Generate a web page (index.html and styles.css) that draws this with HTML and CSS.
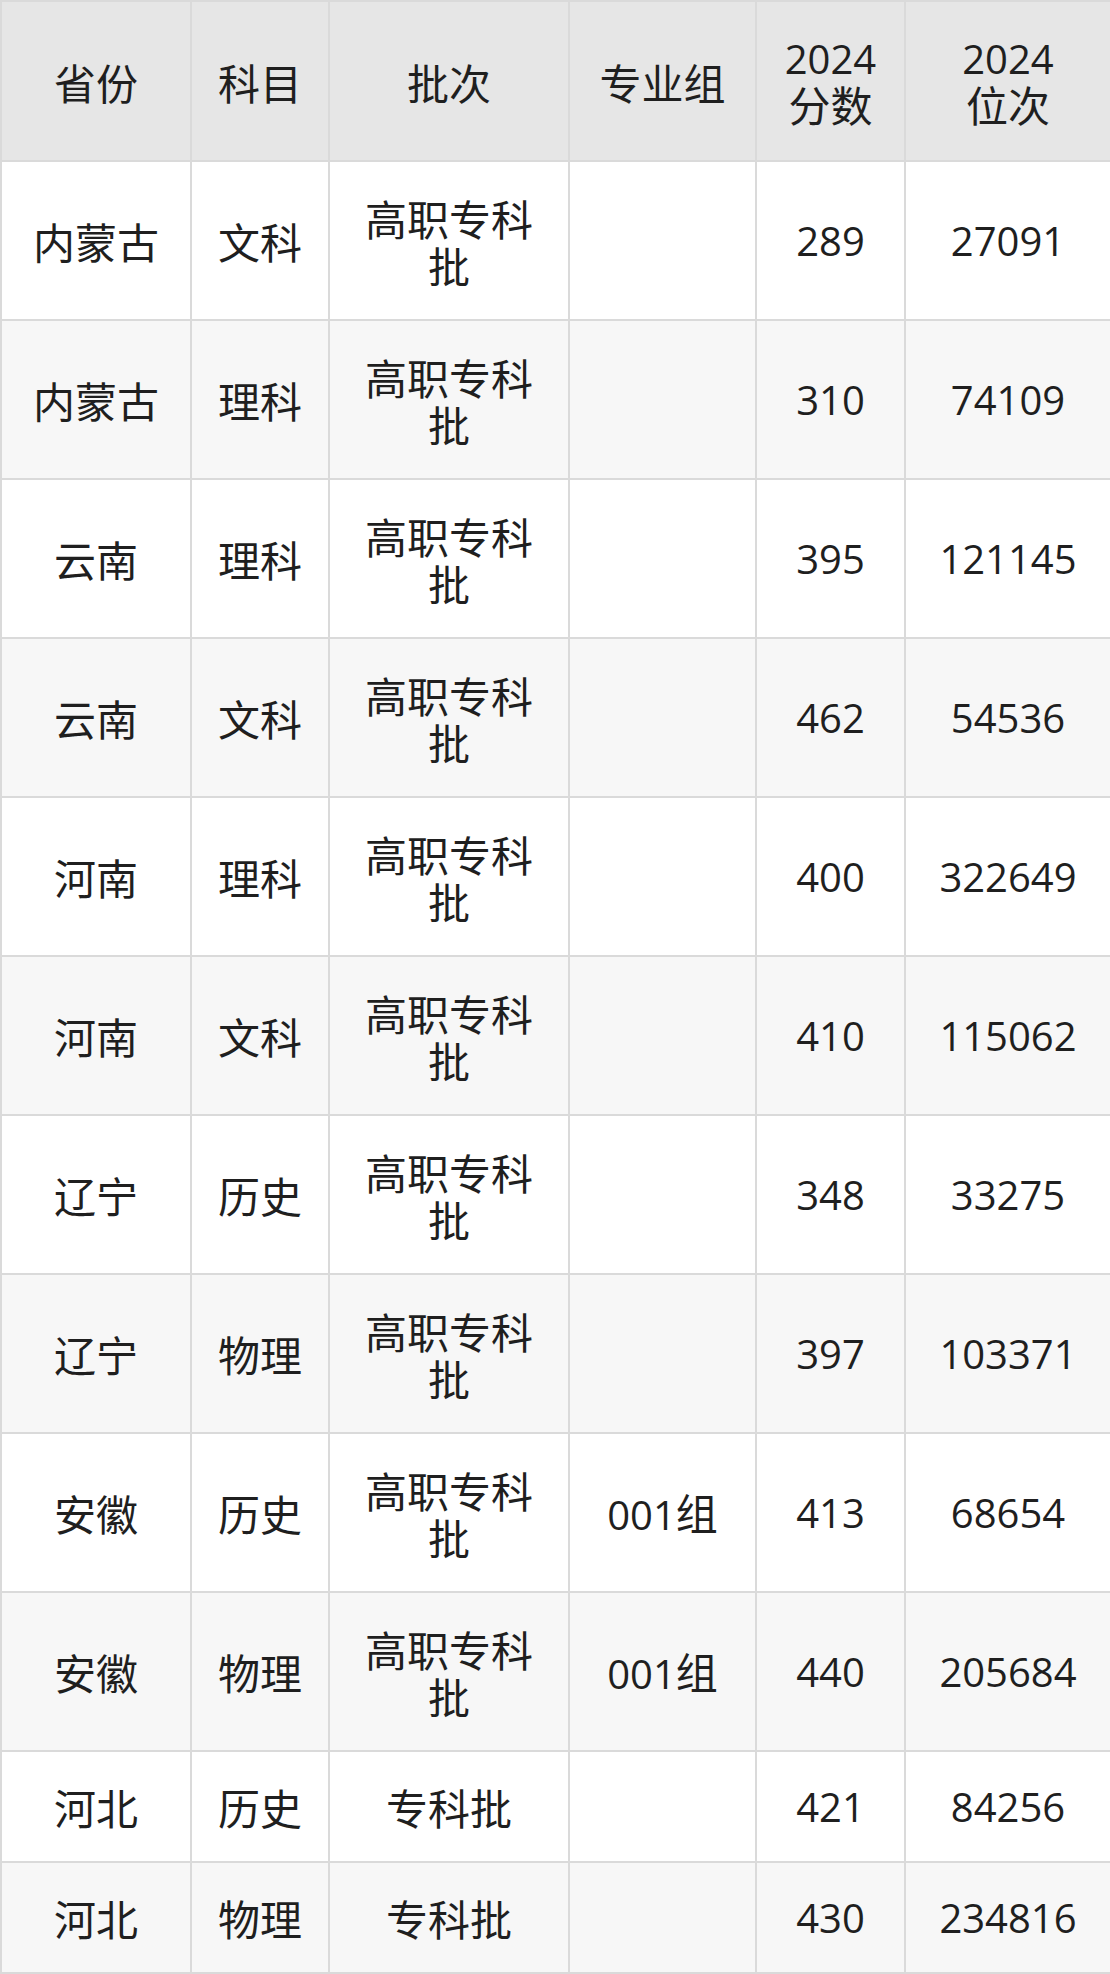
FILE: index.html
```html
<!DOCTYPE html>
<html lang="zh">
<head>
<meta charset="utf-8">
<link rel="stylesheet" href="styles.css">
</head>
<body>
<table class="score-table">
  <colgroup>
    <col class="c1"><col class="c2"><col class="c3"><col class="c4"><col class="c5"><col class="c6">
  </colgroup>
  <thead>
    <tr>
      <th class="zh">省份</th>
      <th class="zh">科目</th>
      <th class="zh">批次</th>
      <th class="zh">专业组</th>
      <th><div class="hline">2024</div><div class="hline zh">分数</div></th>
      <th><div class="hline">2024</div><div class="hline zh">位次</div></th>
    </tr>
  </thead>
  <tbody>
    <tr><td class="zh">内蒙古</td><td class="zh">文科</td><td class="zh">高职专科批</td><td></td><td>289</td><td>27091</td></tr>
    <tr><td class="zh">内蒙古</td><td class="zh">理科</td><td class="zh">高职专科批</td><td></td><td>310</td><td>74109</td></tr>
    <tr><td class="zh">云南</td><td class="zh">理科</td><td class="zh">高职专科批</td><td></td><td>395</td><td>121145</td></tr>
    <tr><td class="zh">云南</td><td class="zh">文科</td><td class="zh">高职专科批</td><td></td><td>462</td><td>54536</td></tr>
    <tr><td class="zh">河南</td><td class="zh">理科</td><td class="zh">高职专科批</td><td></td><td>400</td><td>322649</td></tr>
    <tr><td class="zh">河南</td><td class="zh">文科</td><td class="zh">高职专科批</td><td></td><td>410</td><td>115062</td></tr>
    <tr><td class="zh">辽宁</td><td class="zh">历史</td><td class="zh">高职专科批</td><td></td><td>348</td><td>33275</td></tr>
    <tr><td class="zh">辽宁</td><td class="zh">物理</td><td class="zh">高职专科批</td><td></td><td>397</td><td>103371</td></tr>
    <tr><td class="zh">安徽</td><td class="zh">历史</td><td class="zh">高职专科批</td><td>001<span class="zh-inline">组</span></td><td>413</td><td>68654</td></tr>
    <tr><td class="zh">安徽</td><td class="zh">物理</td><td class="zh">高职专科批</td><td>001<span class="zh-inline">组</span></td><td>440</td><td>205684</td></tr>
    <tr class="short"><td class="zh">河北</td><td class="zh">历史</td><td class="zh">专科批</td><td></td><td>421</td><td>84256</td></tr>
    <tr class="short"><td class="zh">河北</td><td class="zh">物理</td><td class="zh">专科批</td><td></td><td>430</td><td>234816</td></tr>
  </tbody>
</table>
</body>
</html>
```

FILE: styles.css
```css
html, body {
  margin: 0;
  padding: 0;
  background: #ffffff;
}

.score-table {
  width: 1110px;
  border-collapse: collapse;
  table-layout: fixed;
  font-family: "Open Sans", "Noto Sans CJK SC", sans-serif;
  font-size: 40px;
  line-height: 47px;
  color: #1f1f1f;
}

.score-table .zh {
  font-family: "Noto Sans CJK SC", sans-serif;
  font-size: 42px;
}

.zh-inline {
  font-family: "Noto Sans CJK SC", sans-serif;
  font-size: 42px;
}

.c1 { width: 190px; }
.c2 { width: 138px; }
.c3 { width: 240px; }
.c4 { width: 187px; }
.c5 { width: 149px; }
.c6 { width: 206px; }

.score-table th,
.score-table td {
  border: 2px solid #dadada;
  text-align: center;
  vertical-align: middle;
  padding: 0 20px;
  font-weight: normal;
}

.score-table th {
  background: #e6e6e6;
  height: 158px;
  padding: 0 10px;
}

.hline {
  line-height: 45px;
}

.score-table td {
  height: 157px;
}

.score-table tbody tr:nth-child(even) td {
  background: #f7f7f7;
}

.score-table tr.short td {
  height: 109px;
}
```
